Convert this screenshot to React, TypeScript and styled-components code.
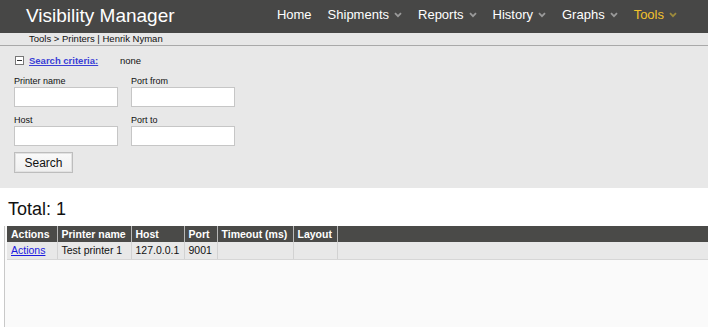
import React from "react";
import styled, { createGlobalStyle } from "styled-components";

const Global = createGlobalStyle`
  html, body { margin: 0; padding: 0; background: #ffffff; }
  body { font-family: "Liberation Sans", Arial, sans-serif; color: #111; }
`;

const Page = styled.div`
  width: 708px;
  height: 327px;
  overflow: hidden;
  display: flex;
  flex-direction: column;
`;

const Header = styled.header`
  height: 33px;
  background: #474746;
  display: flex;
  align-items: center;
  padding: 0 31px 0 26px;
`;

const Brand = styled.div`
  color: #ffffff;
  font-size: 19px;
  margin-top: -2px;
`;

const Nav = styled.nav`
  margin-left: auto;
  display: flex;
  align-items: center;
  gap: 16px;
  margin-top: -4px;
`;

const NavItem = styled.span<{ $active?: boolean }>`
  display: flex;
  align-items: center;
  gap: 5px;
  font-size: 13px;
  color: ${(p) => (p.$active ? "#f3c22c" : "#ffffff")};
  svg { display: block; }
`;

const Crumbs = styled.div`
  height: 12px;
  background: #e7e7e7;
  border-bottom: 1px solid #a9a9a9;
  font-size: 9.5px;
  line-height: 12px;
  padding-left: 29px;
  color: #111;
`;

const SearchPanel = styled.section`
  background: #e8e8e8;
  height: 142px;
  padding: 7px 0 0 14px;
  box-sizing: border-box;
`;

const CriteriaRow = styled.div`
  display: flex;
  align-items: center;
  height: 14px;
  font-size: 9.5px;
`;

const ToggleBox = styled.span`
  width: 7px;
  height: 7px;
  border: 1px solid #777;
  background: #fff;
  margin-left: 1px;
  margin-right: 5px;
  position: relative;
  &::after {
    content: "";
    position: absolute;
    left: 1px;
    right: 1px;
    top: 3px;
    height: 1px;
    background: #333;
  }
`;

const CriteriaLink = styled.a`
  color: #3b3fd6;
  font-weight: bold;
  text-decoration: underline;
  width: 91px;
`;

const Fields = styled.div`
  display: grid;
  grid-template-columns: 117px 104px;
  row-gap: 7px;
  margin-top: 8px;
`;

const Field = styled.label`
  display: flex;
  flex-direction: column;
  font-size: 9px;
  line-height: 12px;
`;

const Input = styled.input`
  width: 104px;
  height: 20px;
  box-sizing: border-box;
  border: 1px solid #c6c6c6;
  background: #ffffff;
  margin: 0;
  padding: 0 3px;
`;

const Button = styled.button`
  margin-top: 6px;
  width: 59px;
  height: 21px;
  box-sizing: border-box;
  border: 1px solid #bdbdbd;
  box-shadow: inset 0 0 0 1px #e2e2e2;
  background: linear-gradient(#fafafa, #efefef);
  font-family: "Liberation Sans", Arial, sans-serif;
  font-size: 12px;
  color: #111;
  padding: 0;
`;

const Total = styled.h2`
  margin: 0;
  padding: 11px 0 0 8px;
  height: 38px;
  box-sizing: border-box;
  font-size: 18px;
  font-weight: normal;
  line-height: 20px;
  color: #111;
`;

const GridWrap = styled.div`
  flex: 1;
  background: #fafafa;
  border-left: 1px solid #c9c9c9;
  margin-left: 4px;
  padding-left: 2px;
`;

const Table = styled.table`
  border-collapse: collapse;
  width: 100%;
  font-size: 10.5px;
  table-layout: fixed;
`;

const Th = styled.th<{ $w?: number }>`
  width: ${(p) => (p.$w ? `${p.$w}px` : "auto")};
  background: #4a4a48;
  color: #ffffff;
  font-weight: bold;
  text-align: left;
  height: 16px;
  padding: 0 0 0 4px;
  border-left: 1px solid #b8b8b8;
  box-sizing: border-box;
  white-space: nowrap;
  &:first-child { border-left: none; }
`;

const Td = styled.td`
  background: #e8e8e8;
  height: 17px;
  padding: 0 0 0 4px;
  border-left: 1px solid #d2d2d2;
  border-bottom: 1px solid #d6d6d6;
  box-sizing: border-box;
  white-space: nowrap;
  color: #111;
  &:first-child { border-left: none; }
`;

const CellLink = styled.a`
  color: #1a1ae0;
  text-decoration: underline;
`;

const Chevron = ({ color }: { color: string }) => (
  <svg width="8" height="6" viewBox="0 0 8 6">
    <path d="M1 1.2 L4 4.2 L7 1.2" stroke={color} strokeWidth="1.8" fill="none" />
  </svg>
);

const navItems = [
  { label: "Home", chevron: false },
  { label: "Shipments", chevron: true },
  { label: "Reports", chevron: true },
  { label: "History", chevron: true },
  { label: "Graphs", chevron: true },
  { label: "Tools", chevron: true, active: true },
];

const columns = [
  { label: "Actions", w: 50 },
  { label: "Printer name", w: 74 },
  { label: "Host", w: 53 },
  { label: "Port", w: 33 },
  { label: "Timeout (ms)", w: 76 },
  { label: "Layout", w: 44 },
  { label: "", w: 0 },
];

export default function App() {
  return (
    <Page>
      <Global />
      <Header>
        <Brand>Visibility Manager</Brand>
        <Nav>
          {navItems.map((n) => (
            <NavItem key={n.label} $active={n.active}>
              {n.label}
              {n.chevron && <Chevron color={n.active ? "#9c8a3c" : "#9a9a9a"} />}
            </NavItem>
          ))}
        </Nav>
      </Header>
      <Crumbs>Tools &gt; Printers | Henrik Nyman</Crumbs>
      <SearchPanel>
        <CriteriaRow>
          <ToggleBox />
          <CriteriaLink href="#">Search criteria:</CriteriaLink>
          <span>none</span>
        </CriteriaRow>
        <Fields>
          <Field>
            Printer name
            <Input />
          </Field>
          <Field>
            Port from
            <Input />
          </Field>
          <Field>
            Host
            <Input />
          </Field>
          <Field>
            Port to
            <Input />
          </Field>
        </Fields>
        <Button>Search</Button>
      </SearchPanel>
      <Total>Total: 1</Total>
      <GridWrap>
        <Table>
          <thead>
            <tr>
              {columns.map((c, i) => (
                <Th key={i} $w={c.w || undefined}>
                  {c.label}
                </Th>
              ))}
            </tr>
          </thead>
          <tbody>
            <tr>
              <Td>
                <CellLink href="#">Actions</CellLink>
              </Td>
              <Td>Test printer 1</Td>
              <Td>127.0.0.1</Td>
              <Td>9001</Td>
              <Td></Td>
              <Td></Td>
              <Td></Td>
            </tr>
          </tbody>
        </Table>
      </GridWrap>
    </Page>
  );
}
